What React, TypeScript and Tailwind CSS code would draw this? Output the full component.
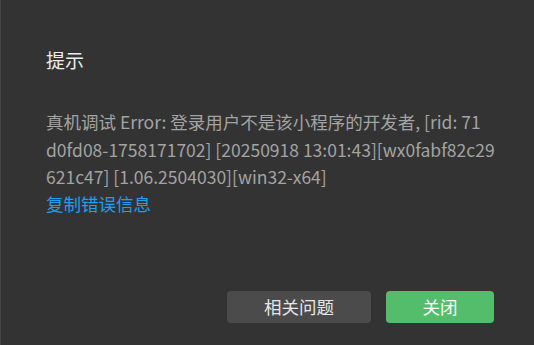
const font = { fontFamily: '"Noto Sans CJK SC", sans-serif' };

const lines = [
  '真机调试 Error: 登录用户不是该小程序的开发者, [rid: 71',
  'd0fd08-1758171702] [20250918 13:01:43][wx0fabf82c29',
  '621c47] [1.06.2504030][win32-x64]',
];

export default function App() {
  return (
    <div
      className="w-[534px] h-[345px] bg-[#333333] border-l border-[#454545] flex flex-col overflow-hidden"
      style={font}
    >
      <div className="pl-[45px] pr-[40px] pt-[47px]">
        <div className="text-[19px] leading-[26px] text-[#ececec]">提示</div>
        <div className="mt-[35px] text-[17.5px] leading-[27.5px] text-[#a3a3a3] whitespace-nowrap">
          {lines.map((l) => (
            <div key={l}>{l}</div>
          ))}
        </div>
        <div className="text-[17.5px] leading-[26px] text-[#1e9ff2] cursor-pointer">复制错误信息</div>
      </div>
      <div className="flex-1" />
      <div className="flex justify-end gap-[15px] pr-[40px] pb-[22px]">
        <button className="w-[144px] h-[32px] rounded-[4px] bg-[#4b4b4b] text-[17.5px] text-[#e6e6e6]">
          相关问题
        </button>
        <button className="w-[108px] h-[32px] rounded-[4px] bg-[#53bd6b] text-[17.5px] text-white">
          关闭
        </button>
      </div>
    </div>
  );
}
